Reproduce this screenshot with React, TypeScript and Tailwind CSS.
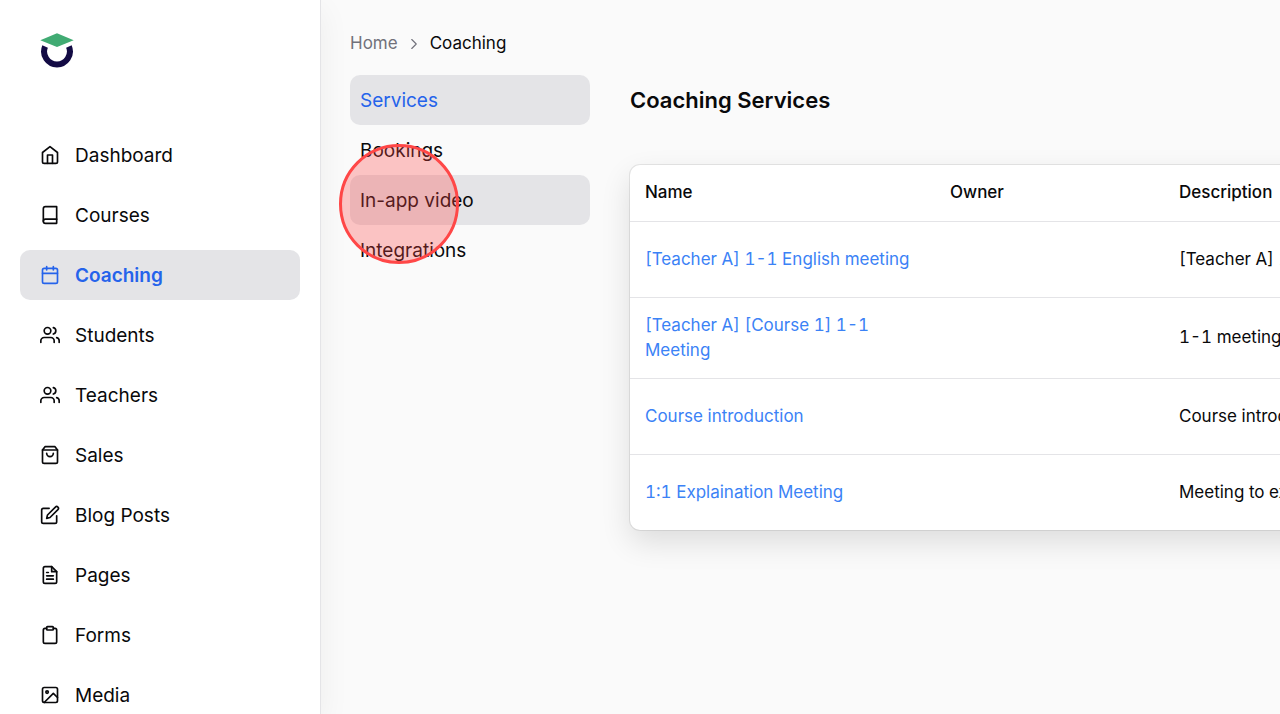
import { FiBook, FiCalendar, FiClipboard, FiEdit, FiFileText, FiHome, FiImage, FiShoppingBag, FiUsers } from 'react-icons/fi';
import { ChevronRight } from 'lucide-react';
import clsx from 'clsx';

const NAV = [
  { label: 'Dashboard', icon: FiHome },
  { label: 'Courses', icon: FiBook },
  { label: 'Coaching', icon: FiCalendar, active: true },
  { label: 'Students', icon: FiUsers },
  { label: 'Teachers', icon: FiUsers },
  { label: 'Sales', icon: FiShoppingBag },
  { label: 'Blog Posts', icon: FiEdit },
  { label: 'Pages', icon: FiFileText },
  { label: 'Forms', icon: FiClipboard },
  { label: 'Media', icon: FiImage },
];

const TABS = [
  { label: 'Services', active: true },
  { label: 'Bookings' },
  { label: 'In-app video', hovered: true },
  { label: 'Integrations' },
];

const SERVICES = [
  { name: '[Teacher A] 1-1 English meeting', description: '[Teacher A] 1-1 English meeting' },
  { name: '[Teacher A] [Course 1] 1-1 Meeting', description: '1-1 meeting' },
  { name: 'Course introduction', description: 'Course introduction' },
  { name: '1:1 Explaination Meeting', description: 'Meeting to explain' },
];

function Logo() {
  return (
    <svg width="34" height="35" viewBox="0 0 34 35" aria-hidden="true">
      <path d="M0.3 7.3 17 0.2l16.7 7.1L17 14z" fill="#41ab73" />
      <path d="M5.1 13.5A12.9 12.9 0 1 0 28.9 13.5" fill="none" stroke="#130b44" strokeWidth="6" />
    </svg>
  );
}

function Sidebar() {
  return (
    <aside className="relative z-10 w-[321px] shrink-0 border-r border-zinc-200 bg-white px-5 pt-[33px] shadow-[0_10px_30px_rgba(0,0,0,0.06)]">
      <a href="#" aria-label="Home page" className="ml-5 block w-fit">
        <Logo />
      </a>
      <nav className="mt-[62px] flex flex-col gap-2.5">
        {NAV.map(({ label, icon: Icon, active }) => (
          <a
            key={label}
            href="#"
            className={clsx(
              'flex h-[50px] items-center gap-[15px] rounded-[10px] px-5 text-[19px] leading-8',
              active ? 'bg-zinc-200 font-semibold text-[#2563eb]' : 'text-zinc-950',
            )}
          >
            <Icon size={20} />
            <span className="pt-0.5">{label}</span>
          </a>
        ))}
      </nav>
    </aside>
  );
}

export default function App() {
  return (
    <div className="flex h-screen overflow-hidden bg-[#fafafa] font-['Inter',sans-serif] text-zinc-950">
      <Sidebar />
      <main className="min-w-0 flex-1 overflow-hidden pl-[29px] pt-[31px]">
        <nav aria-label="Breadcrumb" className="flex items-center text-[17px] leading-[25px]">
          <a href="#" className="text-zinc-500">Home</a>
          <ChevronRight size={18} strokeWidth={1.5} className="mx-[7px] text-zinc-500" />
          <span>Coaching</span>
        </nav>

        <div className="mt-[19px] flex gap-10">
          <nav className="relative flex w-60 shrink-0 flex-col text-[19px] leading-8">
            {TABS.map(tab => (
              <a
                key={tab.label}
                href="#"
                className={clsx(
                  'flex h-[50px] items-center rounded-[10px] px-2.5 pt-0.5',
                  (tab.active || tab.hovered) && 'bg-zinc-200',
                  tab.active && 'text-[#2563eb]',
                )}
              >
                {tab.label}
              </a>
            ))}
            {/* click marker */}
            <span className="pointer-events-none absolute -left-[11px] top-[69px] size-[120px] rounded-full border-3 border-[#ff4747] bg-[#ff4747]/30" />
          </nav>

          <section className="min-w-0 flex-1">
            <h1 className="flex h-[50px] items-center text-[22px] font-semibold">Coaching Services</h1>
            <div className="mt-10 w-max rounded-[10px] bg-white shadow-[0_0_0_1px_rgba(0,0,0,0.08),0_12px_30px_rgba(0,0,0,0.12)]">
              <table className="text-left text-[17px] leading-[25px] tabular-nums">
                <thead>
                  <tr className="h-14 border-b border-zinc-200">
                    <th className="w-[305px] px-[15px] font-medium">Name</th>
                    <th className="w-[229px] px-[15px] font-medium">Owner</th>
                    <th className="w-96 px-[15px] font-medium">Description</th>
                  </tr>
                </thead>
                <tbody>
                  {SERVICES.map(service => (
                    <tr key={service.name} className="h-[76px] border-b border-zinc-200 last:border-b-0">
                      <td className="max-w-[305px] px-[15px] py-[15px]">
                        <a href="#" className="text-[#3b82f6]">{service.name}</a>
                      </td>
                      <td className="px-[15px] py-[15px]" />
                      <td className="whitespace-nowrap px-[15px] py-[15px]">{service.description}</td>
                    </tr>
                  ))}
                </tbody>
              </table>
            </div>
          </section>
        </div>
      </main>
    </div>
  );
}
